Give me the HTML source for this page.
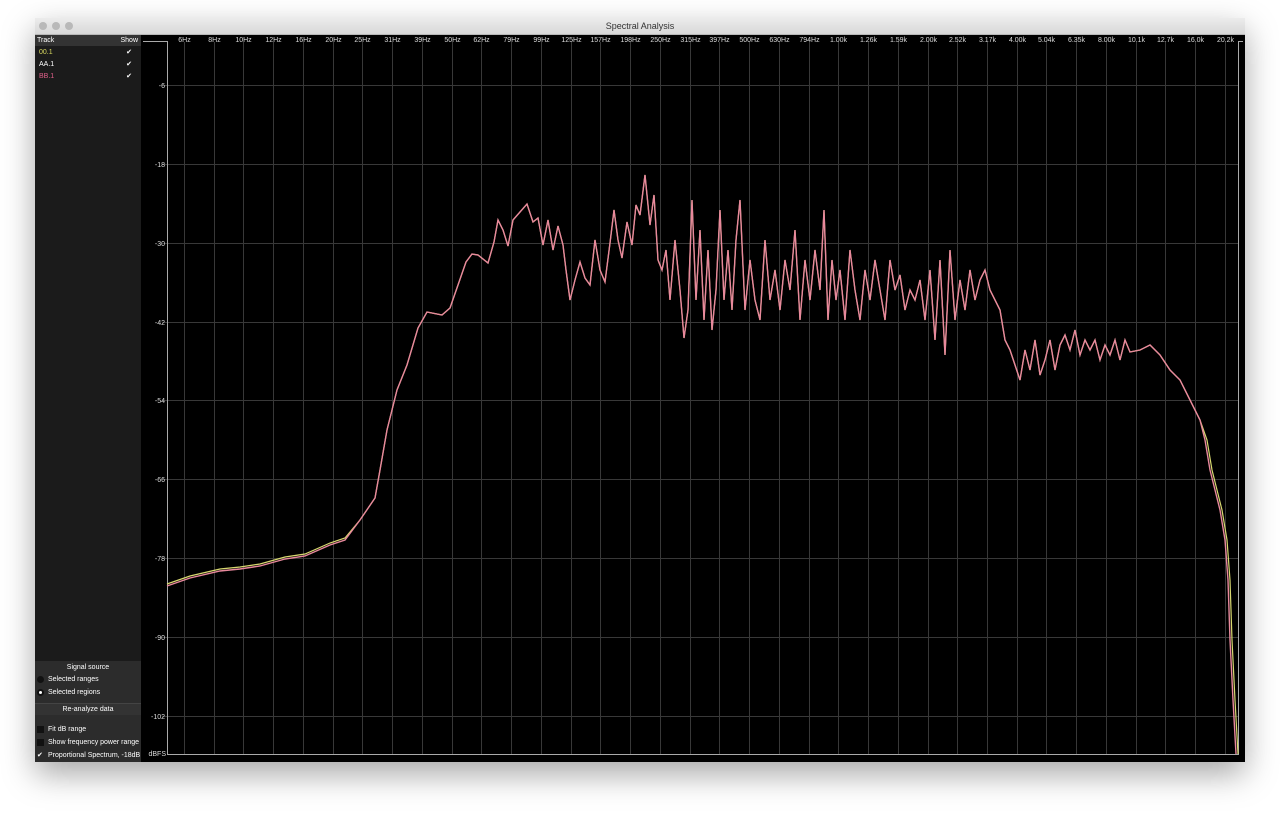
<!DOCTYPE html>
<html><head><meta charset="utf-8"><style>
html,body{margin:0;padding:0;background:#fff;width:1280px;height:813px;overflow:hidden;font-family:"Liberation Sans",sans-serif}
.win{position:absolute;left:35px;top:18px;width:1210px;height:744px;background:#000;box-shadow:0 12px 30px rgba(0,0,0,.35);}
.tb{position:absolute;left:0;top:0;width:1210px;height:16px;background:linear-gradient(#ececec,#d8d8d8);border-bottom:1px solid #b8b8b8;font-size:9px;color:#333;text-align:center;line-height:16px}
.dot{position:absolute;top:4px;width:8px;height:8px;border-radius:50%;background:#b9b9b9}
.side{position:absolute;left:0;top:17px;width:106px;height:727px;background:#1b1b1b;color:#fff;font-size:7px}
.hdr{height:11px;background:#333;line-height:11px;padding-left:2px;position:relative}
.row{height:12px;line-height:14px;padding-left:4px;position:relative}
.ck{position:absolute;right:9px}
.bot{position:absolute;left:0;top:626px;width:106px;height:101px;background:#2c2c2c}
</style></head><body>
<div class="win">
<div class="tb">Spectral Analysis<div class="dot" style="left:4px"></div><div class="dot" style="left:17px"></div><div class="dot" style="left:30px"></div></div>
<div class="side">
<div class="hdr">Track<span style="position:absolute;right:3px">Show</span></div>
<div class="row" style="color:#d8d860">00.1<span class="ck" style="color:#fff">✔</span></div>
<div class="row">AA.1<span class="ck">✔</span></div>
<div class="row" style="color:#e0608a">BB.1<span class="ck" style="color:#fff">✔</span></div>
<div class="bot">
<div style="text-align:center;height:10px;line-height:10px;margin-top:2px">Signal source</div>
<div style="height:13px;line-height:13px;padding-left:13px;position:relative"><span style="position:absolute;left:2px;top:3px;width:7px;height:7px;border-radius:50%;background:#111"></span>Selected ranges</div>
<div style="height:13px;line-height:13px;padding-left:13px;position:relative"><span style="position:absolute;left:2px;top:3px;width:7px;height:7px;border-radius:50%;background:#111;"></span><span style="position:absolute;left:4px;top:5px;width:3px;height:3px;border-radius:50%;background:#fff"></span>Selected regions</div>
<div style="margin-top:4px;height:11px;line-height:11px;text-align:center;background:#333;border-top:1px solid #444">Re-analyze data</div>
<div style="margin-top:8px;height:13px;line-height:13px;padding-left:13px;position:relative"><span style="position:absolute;left:2px;top:3px;width:7px;height:7px;background:#111"></span>Fit dB range</div>
<div style="height:13px;line-height:13px;padding-left:13px;position:relative"><span style="position:absolute;left:2px;top:3px;width:7px;height:7px;background:#111"></span>Show frequency power range</div>
<div style="height:13px;line-height:13px;padding-left:13px;position:relative"><span style="position:absolute;left:2px">✔</span>Proportional Spectrum, -18dB</div>
</div>
</div>
</div>
<svg width="1280" height="813" style="position:absolute;left:0;top:0" font-family="Liberation Sans, sans-serif" font-size="7">
<g id="grid" stroke="#383838" stroke-width="1"></g>
<g id="lab" fill="#ddd"></g>
<path d="M143 41.5H167.5V754.5H1238.5V41.5H1243" stroke="#aaa" fill="none"/>
<polyline id="y" fill="none" stroke="#d8d870" stroke-width="1.2"/>
<polyline id="p" fill="none" stroke="#e8889c" stroke-width="1.4"/>
</svg>
<script>
var g=document.getElementById('grid'),l=document.getElementById('lab'),ns='http://www.w3.org/2000/svg';
var f=['6Hz','8Hz','10Hz','12Hz','16Hz','20Hz','25Hz','31Hz','39Hz','50Hz','62Hz','79Hz','99Hz','125Hz','157Hz','198Hz','250Hz','315Hz','397Hz','500Hz','630Hz','794Hz','1.00k','1.26k','1.59k','2.00k','2.52k','3.17k','4.00k','5.04k','6.35k','8.00k','10.1k','12.7k','16.0k','20.2k'];
f.forEach(function(s,i){var x=Math.round(184+i*29.74)+.5;var ln=document.createElementNS(ns,'line');ln.setAttribute('x1',x);ln.setAttribute('x2',x);ln.setAttribute('y1',42);ln.setAttribute('y2',754);g.appendChild(ln);var t=document.createElementNS(ns,'text');t.setAttribute('x',x);t.setAttribute('y',42);t.setAttribute('text-anchor','middle');t.textContent=s;l.appendChild(t);});
for(var i=0;i<9;i++){var y=Math.round(85+i*78.85)+.5;var ln=document.createElementNS(ns,'line');ln.setAttribute('x1',162);ln.setAttribute('x2',1238);ln.setAttribute('y1',y);ln.setAttribute('y2',y);g.appendChild(ln);var t=document.createElementNS(ns,'text');t.setAttribute('x',165);t.setAttribute('y',y+2.5);t.setAttribute('text-anchor','end');t.textContent=String(-6-12*i);l.appendChild(t);}
var t=document.createElementNS(ns,'text');t.setAttribute('x',166);t.setAttribute('y',756);t.setAttribute('text-anchor','end');t.textContent='dBFS';l.appendChild(t);
var P="167,586 190,578 220,571 240,569 260,566 285,559 305,556 330,545 345,540 360,520 375,498 380,470 387,430 397,390 407,365 418,328 427,312 442,315 450,308 458,285 466,262 472,254 478,255 488,263 494,242 498,220 503,230 508,246 513,220 520,212 527,204 533,222 538,218 543,245 548,220 553,250 558,226 563,245 566,270 570,300 575,280 580,262 585,278 590,285 595,240 600,270 605,282 610,243 614,210 618,240 622,258 627,222 632,245 636,205 640,215 645,175 650,225 654,195 658,260 662,270 666,250 670,300 675,240 680,290 684,338 688,310 692,200 696,300 700,230 704,320 708,250 712,330 716,290 720,210 724,300 728,250 732,310 736,240 740,200 745,310 750,260 755,300 760,320 765,240 770,300 775,270 780,310 785,260 790,290 795,230 800,320 805,260 810,300 815,250 820,290 824,210 828,320 832,260 836,300 840,270 845,320 850,250 855,290 860,320 865,270 870,300 875,260 880,290 885,320 890,260 895,290 900,275 905,310 910,290 915,300 920,280 925,320 930,270 935,340 940,260 945,355 950,250 955,320 960,280 965,310 970,270 975,300 980,280 985,270 990,290 995,300 1000,310 1005,340 1010,350 1015,365 1020,380 1025,350 1030,370 1035,340 1040,375 1045,360 1050,340 1055,370 1060,345 1065,335 1070,350 1075,330 1080,355 1085,340 1090,350 1095,340 1100,360 1105,345 1110,355 1115,340 1120,360 1125,340 1130,352 1140,350 1150,345 1160,355 1170,370 1180,380 1185,390 1190,400 1195,410 1200,420 1205,440 1210,470 1215,490 1220,510 1225,540 1228,580 1230,640 1233,700 1236,754";
document.getElementById('p').setAttribute('points',P);
document.getElementById('y').setAttribute('points',P.split(' ').map(function(s){var a=s.split(',');var x=+a[0],y=+a[1];if(x<360)y-=2;if(x>1200)x+=2;return x+','+y}).join(' '));
</script>
</body></html>
